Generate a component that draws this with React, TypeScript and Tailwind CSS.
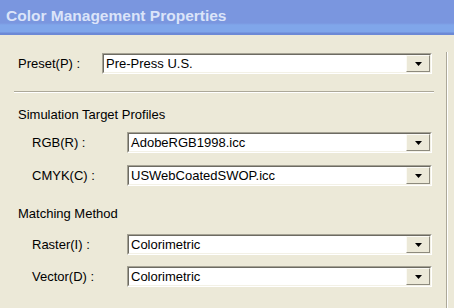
import React from "react";

const font = { fontFamily: '"Liberation Sans", Arial, sans-serif' };

// XP style combo box: sunken field + raised arrow button
const Combo = ({ value, className }: { value: string; className: string }) => (
  <div className={`${className} h-[21px] flex border border-t-[#a5a294] border-l-[#a5a294] border-b-white border-r-white`}>
    <div className="flex-1 flex border border-t-[#6d6b62] border-l-[#6d6b62] border-b-[#f3f1e6] border-r-[#f3f1e6] bg-white">
      <div className="flex-1 flex items-center pl-[2px] text-[13px] text-black leading-none truncate">
        {value}
      </div>
      <div className="w-[24px] flex items-center justify-center bg-[#ece9d8] border border-t-[#fbfaf5] border-l-[#fbfaf5] border-b-[#8d8a7d] border-r-[#8d8a7d]">
        <svg width="7" height="4" viewBox="0 0 7 4">
          <path d="M0 0h7L3.5 4z" fill="#000" />
        </svg>
      </div>
    </div>
  </div>
);

const Row = ({ label, value, labelClass, comboClass }: { label: string; value: string; labelClass: string; comboClass: string }) => (
  <div className="flex items-center">
    <div className={`${labelClass} text-[13px] text-black leading-none`}>{label}</div>
    <Combo value={value} className={comboClass} />
  </div>
);

export default function App() {
  return (
    <div className="w-[454px] h-[308px] overflow-hidden bg-[#ece9d8] flex flex-col" style={font}>
      {/* Title bar */}
      <div className="h-[35px] shrink-0 flex items-start pl-[6px] pt-[7px] bg-[linear-gradient(to_bottom,#7a96df_0px,#7a96df_23px,#80a6ea_25px,#80a6ea_32px,#6c89d6_33px,#6c89d6_35px)]">
        <span className="text-[15.5px] font-bold text-[#dbe4f9] leading-[18px]">Color Management Properties</span>
      </div>

      <div className="flex flex-1">
        <div className="w-[446px] flex flex-col">
          <div className="mt-[18px]">
            <Row label="Preset(P) :" value="Pre-Press U.S." labelClass="pl-[18px] w-[102px]" comboClass="w-[330px]" />
          </div>

          <div className="mt-[17px] ml-[14px] w-[420px] h-[2px] border-t border-t-[#aca899] border-b border-b-white" />

          <div className="mt-[14px] pl-[18px] text-[13px] text-black leading-[16px]">Simulation Target Profiles</div>
          <div className="mt-[9px] flex flex-col gap-[12px]">
            <Row label="RGB(R) :" value="AdobeRGB1998.icc" labelClass="pl-[32px] w-[127px]" comboClass="w-[305px]" />
            <Row label="CMYK(C) :" value="USWebCoatedSWOP.icc" labelClass="pl-[32px] w-[127px]" comboClass="w-[305px]" />
          </div>

          <div className="mt-[20px] pl-[18px] text-[13px] text-black leading-[16px]">Matching Method</div>
          <div className="mt-[12px] flex flex-col gap-[11px]">
            <Row label="Raster(I) :" value="Colorimetric" labelClass="pl-[32px] w-[127px]" comboClass="w-[305px]" />
            <Row label="Vector(D) :" value="Colorimetric" labelClass="pl-[32px] w-[127px]" comboClass="w-[305px]" />
          </div>
        </div>
        <div className="flex-1 mt-[17px] border-l border-l-[#aca899] shadow-[inset_1px_0_0_#fff]" />
      </div>
    </div>
  );
}
